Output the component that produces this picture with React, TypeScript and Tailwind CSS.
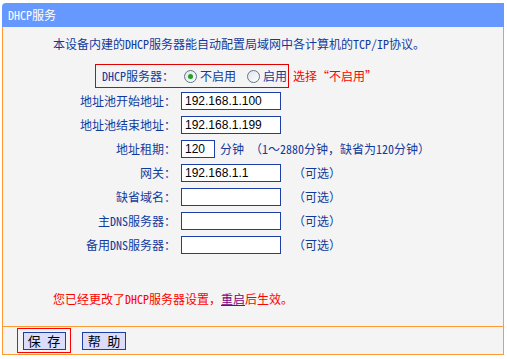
import React from "react";

const Radio = ({ checked }: { checked?: boolean }) => (
  <span className="inline-flex w-[13px] h-[13px] rounded-full border border-[#5f7489] bg-gradient-to-br from-[#dfe3ea] to-white items-center justify-center shrink-0">
    {checked ? <span className="w-[5px] h-[5px] rounded-full bg-[#21a121]" /> : null}
  </span>
);

const Input = ({ value, w = "w-[100px]" }: { value?: string; w?: string }) => (
  <div
    className={`${w} h-[18px] border border-[#1d3ea6] bg-white pl-[3px] flex items-center font-['Liberation_Sans',sans-serif] text-[12px] text-black leading-none`}
  >
    {value}
  </div>
);

const Row = ({ label, children }: { label: string; children: React.ReactNode }) => (
  <div className="h-[24px] flex items-center">
    <div className="w-[173px] text-right text-[#123a9c] whitespace-nowrap">{label}</div>
    <div className="ml-[5px] flex items-center">{children}</div>
  </div>
);

const Optional = () => <span className="ml-[12px] text-[#123a9c]">（可选）</span>;

export default function App() {
  return (
    <div className="w-[507px] h-[359px] bg-white pt-[3px] pl-[2px] font-['Noto_Sans_Mono_CJK_SC','Noto_Sans_CJK_SC',sans-serif] text-[12px] leading-[16px]">
      <div className="w-[502px] h-[352px] flex flex-col">
        <div className="h-[24px] bg-[#6699ff] rounded-tl-[4px] text-white pl-[6px] flex items-center shrink-0">
          DHCP服务
        </div>
        <div className="flex-1 bg-[#f4f4f4] border-x border-[#ff9933] flex flex-col">
          <div className="mt-[9px] pl-[50px] text-[#123a9c] whitespace-nowrap">
            本设备内建的DHCP服务器能自动配置局域网中各计算机的TCP/IP协议。
          </div>
          <div className="mt-[12px] h-[24px] flex items-center">
            <div className="w-[92px] shrink-0" />
            <div className="h-[24px] border border-[#e00000] flex items-center pl-[6px] pr-[1px]">
              <span className="text-[#123a9c] whitespace-nowrap">DHCP服务器：</span>
              <span className="ml-[10px] flex items-center">
                <Radio checked />
                <span className="ml-[3px] text-[#123a9c]">不启用</span>
              </span>
              <span className="ml-[11px] flex items-center">
                <Radio />
                <span className="ml-[3px] text-[#123a9c]">启用</span>
              </span>
            </div>
            <span className="ml-[4px] text-[#ff0000] whitespace-nowrap">选择“不启用”</span>
          </div>
          <div className="mt-[1px] flex flex-col">
            <Row label="地址池开始地址：">
              <Input value="192.168.1.100" />
            </Row>
            <Row label="地址池结束地址：">
              <Input value="192.168.1.199" />
            </Row>
            <Row label="地址租期：">
              <Input value="120" w="w-[34px]" />
              <span className="ml-[5px] text-[#123a9c] whitespace-nowrap">分钟 （1～2880分钟，缺省为120分钟）</span>
            </Row>
            <Row label="网关：">
              <Input value="192.168.1.1" />
              <Optional />
            </Row>
            <Row label="缺省域名：">
              <Input />
              <Optional />
            </Row>
            <Row label="主DNS服务器：">
              <Input />
              <Optional />
            </Row>
            <Row label="备用DNS服务器：">
              <Input />
              <Optional />
            </Row>
          </div>
          <div className="mt-[34px] pl-[50px] text-[#ff0000] whitespace-nowrap">
            您已经更改了DHCP服务器设置，<span className="text-[#800080] underline">重启</span>后生效。
          </div>
        </div>
        <div className="h-[29px] bg-[#f4f4f4] border border-[#ff9933] flex items-center pl-[14px] shrink-0">
          <div className="w-[54px] h-[25px] border border-[#ff0000] flex items-center justify-center">
            <button className="w-[43px] h-[18px] bg-[#dcdcfb] border border-[#1d3ea6] text-black text-[13px] leading-none flex items-center justify-center">
              保 存
            </button>
          </div>
          <button className="ml-[11px] w-[44px] h-[18px] bg-[#dcdcfb] border border-[#1d3ea6] text-black text-[13px] leading-none flex items-center justify-center">
            帮 助
          </button>
        </div>
      </div>
    </div>
  );
}
